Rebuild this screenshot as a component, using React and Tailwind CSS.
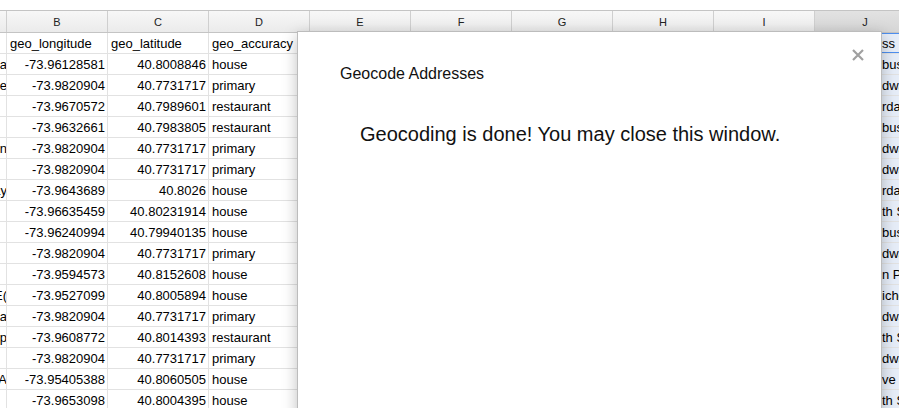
import React from "react";

const rows = [
  ["ea", "-73.96128581", "40.8008846", "house", "bus"],
  ["e", "-73.9820904", "40.7731717", "primary", "dwa"],
  ["", "-73.9670572", "40.7989601", "restaurant", "rda"],
  ["", "-73.9632661", "40.7983805", "restaurant", "bus"],
  ["n", "-73.9820904", "40.7731717", "primary", "dwa"],
  ["", "-73.9820904", "40.7731717", "primary", "dwa"],
  ["ay", "-73.9643689", "40.8026", "house", "rda"],
  ["", "-73.96635459", "40.80231914", "house", "th S"],
  ["", "-73.96240994", "40.79940135", "house", "bus"],
  ["", "-73.9820904", "40.7731717", "primary", "dwa"],
  ["", "-73.9594573", "40.8152608", "house", "n P"],
  ["E(", "-73.9527099", "40.8005894", "house", "icho"],
  ["a", "-73.9820904", "40.7731717", "primary", "dwa"],
  ["p", "-73.9608772", "40.8014393", "restaurant", "th S"],
  ["", "-73.9820904", "40.7731717", "primary", "dwa"],
  ["A", "-73.95405388", "40.8060505", "house", "ve"],
  ["", "-73.9653098", "40.8004395", "house", "th S"],
];

const letters = ["B", "C", "D", "E", "F", "G", "H", "I"];

function HeaderRow() {
  return (
    <div className="flex h-[23px] border-y border-[#c4c4c4] text-[11px] text-[#222] leading-[21px]">
      <div className="w-[7px] shrink-0 border-r border-[#cfcfcf] bg-gradient-to-b from-[#f7f7f7] to-[#ebebeb]" />
      {letters.map((l) => (
        <div
          key={l}
          className="w-[101px] shrink-0 border-r border-[#cfcfcf] bg-gradient-to-b from-[#f7f7f7] to-[#ebebeb] text-center pt-[1px]"
        >
          {l}
        </div>
      ))}
      <div className="w-[101px] shrink-0 border-r border-[#c4c4c4] bg-gradient-to-b from-[#e2e2e2] to-[#d6d6d6] text-center pt-[1px]">
        J
      </div>
    </div>
  );
}

function Row({ a, b, c, d, j, head }) {
  return (
    <div className="flex h-[21px] shrink-0 border-b border-[#e2e2e2] text-[13px] leading-[18px] text-black">
      <div className="w-[7px] shrink-0 border-r border-[#e2e2e2] overflow-hidden flex justify-end whitespace-nowrap pt-[2px]">
        <span className="mr-[-1px]">{a}</span>
      </div>
      <div
        className={`w-[101px] shrink-0 border-r border-[#e2e2e2] whitespace-nowrap overflow-hidden pt-[2px] ${
          head ? "pl-[3px] text-left" : "pr-[2px] text-right"
        }`}
      >
        {b}
      </div>
      <div
        className={`w-[101px] shrink-0 border-r border-[#e2e2e2] whitespace-nowrap overflow-hidden pt-[2px] ${
          head ? "pl-[3px] text-left" : "pr-[2px] text-right"
        }`}
      >
        {c}
      </div>
      <div className="w-[101px] shrink-0 border-r border-[#e2e2e2] pl-[3px] pt-[2px] whitespace-nowrap overflow-hidden">
        {d}
      </div>
      {["E", "F", "G", "H", "I"].map((k) => (
        <div key={k} className="w-[101px] shrink-0 border-r border-[#e2e2e2]" />
      ))}
      <div className="relative w-[101px] shrink-0 bg-[#e6edf8] pl-[67px] pt-[2px] whitespace-nowrap overflow-hidden">
        {j}
        {head && (
          <div className="absolute inset-x-0 top-0 bottom-[-1px] border-t border-b-2 border-[#4d8ff0]" />
        )}
      </div>
    </div>
  );
}

export default function App() {
  return (
    <div
      className="relative w-[899px] h-[408px] overflow-hidden bg-white"
      style={{ fontFamily: '"Liberation Sans", Arial, sans-serif' }}
    >
      <div className="h-[10px] bg-white" />
      <HeaderRow />
      <Row a="" b="geo_longitude" c="geo_latitude" d="geo_accuracy" j="ss" head />
      {rows.map((r, i) => (
        <Row key={i} a={r[0]} b={r[1]} c={r[2]} d={r[3]} j={r[4]} />
      ))}

      <div className="absolute left-[297px] top-[31px] w-[585px] h-[420px] bg-white border border-[#bcbcbc] shadow-[0_4px_14px_rgba(0,0,0,0.25)]">
        <button className="absolute top-[17px] right-[17px] w-[12px] h-[12px] flex items-center justify-center">
          <svg width="12" height="12" viewBox="0 0 12 12">
            <path d="M1 1 L11 11 M11 1 L1 11" stroke="#a0a0a0" strokeWidth="2.2" strokeLinecap="butt" />
          </svg>
        </button>
        <div className="pl-[42px] pt-[32px] text-[16px] leading-[19px] text-[#111]">Geocode Addresses</div>
        <div className="pl-[62px] pt-[39px] text-[20px] leading-[24px] text-[#111]">
          Geocoding is done! You may close this window.
        </div>
      </div>
    </div>
  );
}
